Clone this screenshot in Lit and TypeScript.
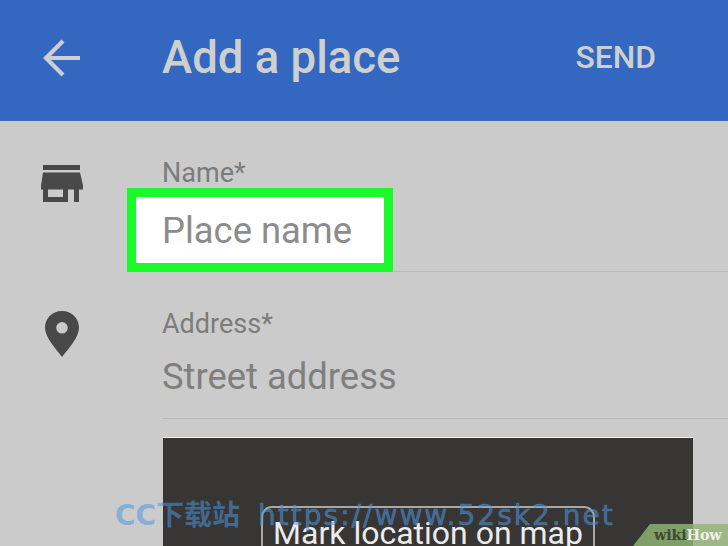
import { LitElement, html, css } from "lit";
import { customElement } from "lit/decorators.js";

@customElement("app-root")
export class AppRoot extends LitElement {
  static styles = css`
    :host { display: block; width: 728px; height: 546px; position: relative; overflow: hidden; background: #cbcbcb; font-family: Roboto, "Noto Sans CJK SC", sans-serif; }
    .bar { height: 121px; background: #3367c0; display: flex; align-items: center; color: #cfcfcf; box-sizing: border-box; border-bottom: 1px solid #3a68b4; }
    .back { width: 163px; flex: none; display: flex; justify-content: flex-start; padding-left: 42px; box-sizing: border-box; margin-top: -5px; }
    .title { flex: 1; font-size: 45.5px; font-weight: 500; margin-top: -5px; margin-left: -1px; }
    .send { font-size: 31.8px; font-weight: 500; margin-right: 72px; margin-top: -7px; }
    .row { display: flex; }
    .icon { width: 163px; flex: none; display: flex; }
    .icon.store { padding: 44px 0 0 40px; box-sizing: border-box; }
    .icon.pin { padding: 39px 0 0 45px; box-sizing: border-box; }
    .field { flex: 1; position: relative; }
    .name { height: 151px; padding-top: 37px; box-sizing: border-box; border-bottom: 1px solid #b9b9b9; }
    .addr { height: 147px; padding-top: 37px; box-sizing: border-box; border-bottom: 1px solid #b9b9b9; }
    .label { font-size: 27px; line-height: 30px; color: #7c7c7c; margin-left: -1px; }
    .hint { font-size: 36.4px; line-height: 44px; color: #7f7f7f; position: relative; margin-left: -1px; }
    .name .hint { margin-top: 21px; color: #8c8c8c; }
    .addr .hint { margin-top: 16px; }
    .highlight { position: absolute; left: -36px; top: 67px; width: 266px; height: 84px; box-sizing: border-box; background: #fff; border: 9px solid #1cf92b; }
    .map { margin: 18px 35px 0 163px; height: 120px; background: #383634; border-top: 1px solid #eee; box-sizing: border-box; display: flex; justify-content: center; padding-top: 68px; }
    .mark { width: 334px; height: 60px; box-sizing: border-box; border: 2px solid #a8a8a8; border-radius: 11px; color: #ececec; font-size: 32px; line-height: 50px; text-align: center; white-space: nowrap; }
    .wm { position: absolute; left: 115px; top: 498px; color: rgba(76, 150, 222, 0.55); font-size: 28px; line-height: 36px; font-weight: 700; white-space: nowrap; font-family: "DejaVu Sans", "Noto Sans CJK SC", sans-serif; }
    .wm .url { margin-left: 18px; letter-spacing: 2px; font-weight: 400; -webkit-text-stroke: 0.6px rgba(76,150,222,0.55); }
    .wh { position: absolute; right: 0; bottom: 0; width: 95px; height: 22px; }
    .wh svg { position: absolute; inset: 0; }
    .wh .t { position: absolute; left: 21px; top: 1px; font: 700 14.4px/20px "DejaVu Serif", serif; color: #3e4a35; white-space: nowrap; letter-spacing: -0.2px; }
    .wh .t span { color: #f0f0ec; }
  `;

  render() {
    return html`
      <div class="bar">
        <div class="back">
          <svg width="40" height="38" viewBox="0 0 40 38" fill="none" stroke="#cfcfcf" stroke-width="4.2">
            <path d="M38 19H5"/><path d="M21 2 4 19l17 17"/>
          </svg>
        </div>
        <div class="title">Add a place</div>
        <div class="send">SEND</div>
      </div>
      <div class="row">
        <div class="icon store">
          <svg width="44" height="37" viewBox="0 0 44 37" fill="#484848">
            <rect x="3" y="0" width="37" height="5"/>
            <path d="M3 7.500h37l3 13v4H1v-4z"/>
            <rect x="3" y="24" width="5" height="13"/>
            <rect x="3" y="32" width="25" height="5"/>
            <rect x="23" y="24" width="5" height="13"/>
            <rect x="34" y="24" width="5" height="13"/>
          </svg>
        </div>
        <div class="field name">
          <div class="label">Name*</div>
          <div class="highlight"></div>
          <div class="hint">Place name</div>
        </div>
      </div>
      <div class="row">
        <div class="icon pin">
          <svg width="34" height="46" viewBox="0 0 34 46">
            <path fill="#484848" fill-rule="evenodd" d="M17 0C7.600 0 0 7.400 0 16.600 0 27 11 38 17 46c6-8 17-19 17-29.400C34 7.400 26.400 0 17 0zm0 11a5.800 5.800 0 1 1 0 11.600 5.800 5.800 0 0 1 0-11.600z"/>
          </svg>
        </div>
        <div class="field addr">
          <div class="label">Address*</div>
          <div class="hint">Street address</div>
        </div>
      </div>
      <div class="map"><div class="mark">Mark location on map</div></div>
      <div class="wm">CC下载站<span class="url">https://www.52sk2.net</span></div>
      <div class="wh">
        <svg width="95" height="22" viewBox="0 0 95 22"><path fill="#7f9f66" d="M17 0H95V22H0z"/><path fill="#9db787" d="M60 0H95V22H60z"/></svg>
        <div class="t">wiki<span>How</span></div>
      </div>
    `;
  }
}
